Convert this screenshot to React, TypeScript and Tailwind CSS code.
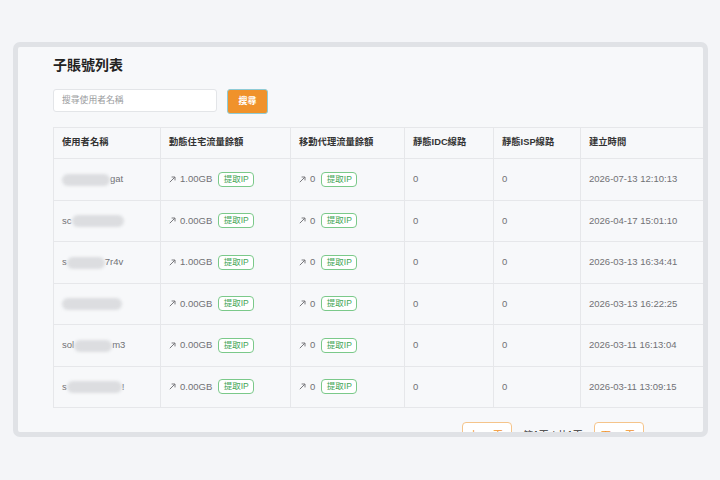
import React from 'react';

const FONT = { fontFamily: '"Liberation Sans", "Noto Sans CJK TC", sans-serif' };

type Row = {
  pre: string;
  blur: number;
  post: string;
  home: string;
  created: string;
};

const ROWS: Row[] = [
  { pre: '', blur: 48, post: 'gat', home: '1.00GB', created: '2026-07-13 12:10:13' },
  { pre: 'sc', blur: 52, post: '', home: '0.00GB', created: '2026-04-17 15:01:10' },
  { pre: 's', blur: 38, post: '7r4v', home: '1.00GB', created: '2026-03-13 16:34:41' },
  { pre: '', blur: 60, post: '', home: '0.00GB', created: '2026-03-13 16:22:25' },
  { pre: 'sol', blur: 38, post: 'm3', home: '0.00GB', created: '2026-03-11 16:13:04' },
  { pre: 's', blur: 55, post: '!', home: '0.00GB', created: '2026-03-11 13:09:15' },
];

const Badge = () => (
  <span className="ml-[6px] inline-flex h-[15px] w-[36px] items-center justify-center rounded-[4px] border border-[#7bc98a] bg-white text-[8.5px] leading-none text-[#3fa556]">
    提取IP
  </span>
);

const Arrow = () => (
  <svg width="7" height="7" viewBox="0 0 7 7" className="mr-[4px]" fill="none" stroke="#7a7a7e" strokeWidth="1">
    <path d="M0.8 6.2 L6 1" />
    <path d="M2.6 1 H6 V4.4" />
  </svg>
);

const Blurred = ({ w }: { w: number }) => (
  <span
    className="inline-block h-[12px] rounded-full bg-[#dcdde0] blur-[1.5px] align-middle"
    style={{ width: w }}
  />
);

export default function App() {
  const th = 'border border-[#e6e7ea] px-2 text-left text-[9.3px] font-bold text-[#333]';
  const td = 'whitespace-nowrap border border-[#e6e7ea] px-2 text-[9.5px] text-[#717175]';

  return (
    <div className="h-[480px] w-[720px] bg-[#f4f5f8] pt-[42px] pl-[13px]" style={FONT}>
      <div className="h-[395px] w-[695px] overflow-hidden rounded-[7px] border-[5px] border-[#e0e2e6] bg-[#f7f8fa]">
        <div className="pt-[6px] pl-[35px]">
          <h2 className="h-6 text-[14px] leading-6 font-bold text-[#222]">子賬號列表</h2>

          <div className="mt-3 flex items-start gap-[10px]">
            <div className="flex h-[23px] w-[164px] items-center rounded-[3px] border border-[#e3e5e8] bg-white px-2 text-[8.8px] text-[#9a9ca0]">
              搜尋使用者名稱
            </div>
            <button className="h-[25px] w-[41px] rounded-[3px] border border-[#8ecbd6] bg-[#f0922b] text-[9px] font-bold text-white">
              搜尋
            </button>
          </div>

          <table className="mt-[13px] table-fixed border-collapse" style={{ width: 650 }}>
            <colgroup>
              <col style={{ width: 107 }} />
              <col style={{ width: 130 }} />
              <col style={{ width: 114 }} />
              <col style={{ width: 89 }} />
              <col style={{ width: 87 }} />
              <col style={{ width: 123 }} />
            </colgroup>
            <thead>
              <tr className="h-[31px]">
                <th className={th}>使用者名稱</th>
                <th className={th}>動態住宅流量餘額</th>
                <th className={th}>移動代理流量餘額</th>
                <th className={th}>靜態IDC線路</th>
                <th className={th}>靜態ISP線路</th>
                <th className={th}>建立時間</th>
              </tr>
            </thead>
            <tbody>
              {ROWS.map((r, i) => (
                <tr key={i} className="h-[41.5px]">
                  <td className={td}>
                    {r.pre}
                    <Blurred w={r.blur} />
                    {r.post}
                  </td>
                  <td className={td}>
                    <span className="inline-flex items-center">
                      <Arrow />
                      {r.home}
                      <Badge />
                    </span>
                  </td>
                  <td className={td}>
                    <span className="inline-flex items-center">
                      <Arrow />0
                      <Badge />
                    </span>
                  </td>
                  <td className={td}>0</td>
                  <td className={td}>0</td>
                  <td className={td}>{r.created}</td>
                </tr>
              ))}
            </tbody>
          </table>

          <div className="mt-[14px] flex items-center pl-[409px] text-[10px]">
            <button className="h-[26px] w-[50px] rounded-[4px] border border-[#f5c48a] bg-white tracking-[2px] text-[#f0922b]">
              上一頁
            </button>
            <span className="w-[82px] text-center whitespace-nowrap text-[#333]">第1頁 / 共1頁</span>
            <button className="h-[26px] w-[50px] rounded-[4px] border border-[#f5c48a] bg-white tracking-[2px] text-[#f0922b]">
              下一頁
            </button>
          </div>
        </div>
      </div>
    </div>
  );
}
